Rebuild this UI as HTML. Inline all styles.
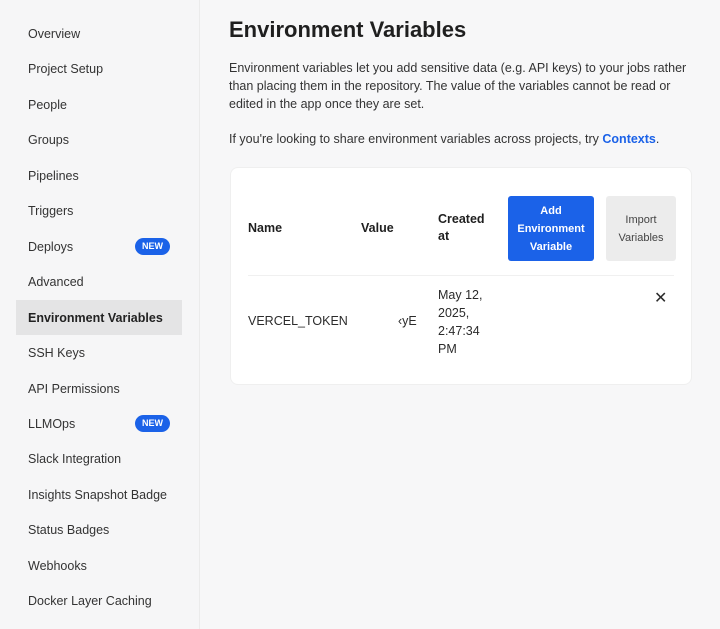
<!DOCTYPE html>
<html><head><style>
*{margin:0;padding:0;box-sizing:border-box}
body{width:720px;height:629px;background:#f7f7f8;font-family:"Liberation Sans",sans-serif;color:#2b2b2b;position:relative;overflow:hidden}
.side{position:absolute;left:0;top:0;width:200px;height:629px;border-right:1px solid #ebebeb;background:#f6f6f7}
.it{position:absolute;left:16px;width:166px;height:35px;line-height:37px;padding-left:12px;font-size:12.5px;color:#333}
.it.act{background:#e4e4e5;font-weight:bold;color:#222}
.new{position:absolute;right:12px;top:9px;background:#1b62e8;color:#fff;font-size:9px;font-weight:bold;border-radius:9px;line-height:17px;height:17px;padding:0 7px}
h1{position:absolute;left:229px;top:17px;font-size:22px;font-weight:bold;color:#1f1f1f}
.p{position:absolute;left:229px;font-size:12.5px;line-height:18px;color:#333;width:470px}
.card{position:absolute;left:230px;top:167px;width:462px;height:218px;background:#fff;border-radius:8px;border:1px solid #efefef}
.t{position:absolute;font-size:12.5px;line-height:17px;color:#2b2b2b}
.b{font-weight:bold;color:#1f1f1f}
.btn{position:absolute;text-align:center;font-size:11px;line-height:18px;border-radius:3px;display:flex;align-items:center;justify-content:center}
</style></head><body>
<div class="side">
<div class="it" style="top:16px">Overview</div>
<div class="it" style="top:51px">Project Setup</div>
<div class="it" style="top:87px">People</div>
<div class="it" style="top:122px">Groups</div>
<div class="it" style="top:158px">Pipelines</div>
<div class="it" style="top:193px">Triggers</div>
<div class="it" style="top:229px">Deploys<span class="new">NEW</span></div>
<div class="it" style="top:264px">Advanced</div>
<div class="it act" style="top:300px">Environment Variables</div>
<div class="it" style="top:335px">SSH Keys</div>
<div class="it" style="top:371px">API Permissions</div>
<div class="it" style="top:406px">LLMOps<span class="new">NEW</span></div>
<div class="it" style="top:441px">Slack Integration</div>
<div class="it" style="top:477px">Insights Snapshot Badge</div>
<div class="it" style="top:512px">Status Badges</div>
<div class="it" style="top:548px">Webhooks</div>
<div class="it" style="top:583px">Docker Layer Caching</div>
</div>
<h1>Environment Variables</h1>
<div class="p" style="top:59px">Environment variables let you add sensitive data (e.g. API keys) to your jobs rather than placing them in the repository. The value of the variables cannot be read or edited in the app once they are set.</div>
<div class="p" style="top:130px">If you're looking to share environment variables across projects, try <span style="color:#1b62e8;font-weight:bold">Contexts</span>.</div>
<div class="card">
<div class="t b" style="left:17px;top:52px">Name</div>
<div class="t b" style="left:130px;top:52px">Value</div>
<div class="t b" style="left:207px;top:43px">Created<br>at</div>
<div class="btn" style="left:277px;top:28px;width:86px;height:65px;background:#1b62e8;color:#fff;font-weight:bold">Add<br>Environment<br>Variable</div>
<div class="btn" style="left:375px;top:28px;width:70px;height:65px;background:#ececec;color:#444">Import<br>Variables</div>
<div style="position:absolute;left:17px;right:17px;top:107px;height:1px;background:#f0f0f0"></div>
<div class="t" style="left:17px;top:145px">VERCEL_TOKEN</div>
<div class="t" style="left:167px;top:145px">‹yE</div>
<div class="t" style="left:207px;top:118px;line-height:18px">May 12,<br>2025,<br>2:47:34<br>PM</div>
<div class="t" style="left:423px;top:122px;font-size:16px">✕</div>
</div>
</body></html>
